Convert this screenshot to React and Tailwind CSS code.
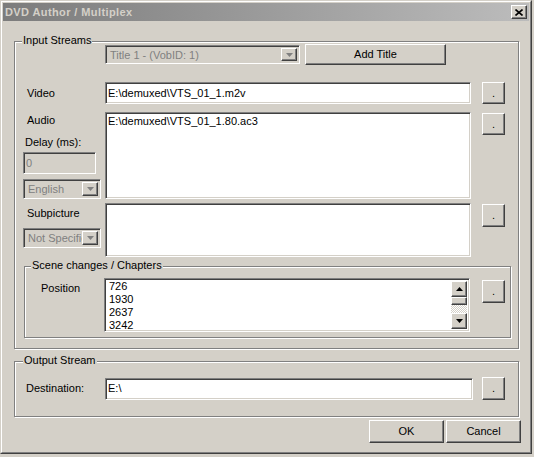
import React from 'react';

const sunken =
  'border border-[#808080] border-r-white border-b-white shadow-[inset_1px_1px_0_#404040,inset_-1px_-1px_0_#d4d0c8]';
const raised =
  'border border-white border-r-[#404040] border-b-[#404040] shadow-[inset_-1px_-1px_0_#808080,inset_1px_1px_0_#d4d0c8]';
const etched =
  'relative border border-[#808080] shadow-[inset_1px_1px_0_#ffffff,1px_1px_0_#ffffff]';

const Arrow = ({ down = true, color = '#000' }) => (
  <svg width="7" height="4" viewBox="0 0 7 4">
    <path d={down ? 'M0 0h7L3.5 4z' : 'M0 4h7L3.5 0z'} fill={color} />
  </svg>
);

const Combo = ({ text, className }) => (
  <div className={`flex bg-[#d4d0c8] p-[2px] ${sunken} ${className}`}>
    <span className="flex-1 overflow-hidden whitespace-nowrap pl-[2px] text-[#808080] leading-[14px]">
      {text}
    </span>
    <div className={`w-[16px] flex items-center justify-center bg-[#d4d0c8] ${raised}`}>
      <Arrow color="#808080" />
    </div>
  </div>
);

const Dots = ({ className }) => (
  <button className={`w-[23px] bg-[#d4d0c8] flex items-center justify-center ${raised} ${className}`}>
    <span className="text-[11px] leading-[11px]">.</span>
  </button>
);

const GroupLabel = ({ children, className }) => (
  <span className={`absolute top-[-8px] bg-[#d4d0c8] px-[1px] leading-[13px] ${className}`}>
    {children}
  </span>
);

const App = () => {
  return (
    <div
      className="w-[534px] h-[457px] bg-[#d4d0c8] text-[11px] leading-[13px] text-black"
      style={{ fontFamily: '"Liberation Sans", Arial, sans-serif' }}
    >
      <div className="w-[532px] h-[454px] border border-[#d4d0c8] border-r-[#404040] border-b-[#404040]">
        <div className="h-full border border-white border-r-[#808080] border-b-[#808080] p-[1px] flex flex-col">
          {/* title bar */}
          <div className="h-[18px] flex items-center bg-gradient-to-r from-[#7c7c7c] to-[#bcbcbc] pl-[2px] pr-[2px]">
            <span className="flex-1 font-bold text-[11px] tracking-[0.4px] text-[#d4d0c8]">
              DVD Author / Multiplex
            </span>
            <div className={`w-[16px] h-[14px] flex items-center justify-center bg-[#d4d0c8] ${raised}`}>
              <svg width="8" height="7" viewBox="0 0 8 7">
                <path d="M0.5 0.5l7 6M7.5 0.5l-7 6" stroke="#000" strokeWidth="1.6" />
              </svg>
            </div>
          </div>

          {/* Input Streams */}
          <div className={`${etched} mt-[20px] ml-[11px] w-[505px] h-[308px]`}>
            <GroupLabel className="left-[7px]">Input Streams</GroupLabel>

            <div className="mt-[2px] h-[21px] flex items-center pl-[90px]">
              <Combo text="Title 1 - (VobID: 1)" className="w-[195px] h-[19px]" />
              <button className={`ml-[5px] w-[141px] h-[21px] bg-[#d4d0c8] ${raised}`}>
                Add Title
              </button>
            </div>

            {/* Video */}
            <div className="mt-[17px] flex items-center">
              <span className="w-[90px] pl-[12px]">Video</span>
              <div className={`w-[366px] h-[22px] bg-white flex items-center pl-[2px] ${sunken}`}>
                E:\demuxed\VTS_01_1.m2v
              </div>
              <Dots className="ml-[11px] h-[22px]" />
            </div>

            {/* Audio */}
            <div className="mt-[8px] flex items-start">
              <div className="w-[90px] flex flex-col items-start">
                <span className="mt-[2px] pl-[12px]">Audio</span>
                <span className="mt-[9px] pl-[10px]">Delay (ms):</span>
                <div className={`mt-[3px] ml-[8px] w-[73px] h-[22px] bg-[#d4d0c8] pl-[2px] flex items-center text-[#808080] ${sunken}`}>
                  0
                </div>
                <Combo text="English" className="mt-[5px] ml-[8px] w-[78px] h-[20px]" />
              </div>
              <div className={`w-[366px] h-[87px] bg-white pl-[2px] pt-[2px] ${sunken}`}>
                E:\demuxed\VTS_01_1.80.ac3
              </div>
              <Dots className="ml-[11px] mt-[1px] h-[22px]" />
            </div>

            {/* Subpicture */}
            <div className="mt-[4px] flex items-start">
              <div className="w-[90px] flex flex-col items-start">
                <span className="mt-[4px] pl-[12px]">Subpicture</span>
                <Combo text="Not Specified" className="mt-[8px] ml-[8px] w-[78px] h-[20px]" />
              </div>
              <div className={`w-[366px] h-[54px] bg-white ${sunken}`} />
              <Dots className="ml-[11px] mt-[1px] h-[23px]" />
            </div>

            {/* Scene changes */}
            <div className={`${etched} mt-[9px] ml-[9px] w-[487px] h-[72px]`}>
              <GroupLabel className="left-[6px]">Scene changes / Chapters</GroupLabel>
              <div className="mt-[11px] flex items-start">
                <span className="w-[79px] pl-[16px] mt-[4px]">Position</span>
                <div className={`w-[366px] h-[54px] bg-white flex p-[2px] ${sunken}`}>
                  <div className="flex-1 overflow-hidden pl-[2px] -mt-[1px]">
                    <div>726</div>
                    <div>1930</div>
                    <div>2637</div>
                    <div>3242</div>
                  </div>
                  <div className="w-[16px] flex flex-col">
                    <div className={`h-[16px] flex items-center justify-center bg-[#d4d0c8] ${raised}`}>
                      <Arrow down={false} />
                    </div>
                    <div className={`h-[8px] bg-[#d4d0c8] ${raised}`} />
                    <div className="flex-1 bg-[repeating-conic-gradient(#d4d0c8_0%_25%,#ffffff_0%_50%)] bg-[length:2px_2px]" />
                    <div className={`h-[16px] flex items-center justify-center bg-[#d4d0c8] ${raised}`}>
                      <Arrow />
                    </div>
                  </div>
                </div>
                <Dots className="ml-[12px] mt-[2px] h-[23px]" />
              </div>
            </div>
          </div>

          {/* Output Stream */}
          <div className={`${etched} mt-[12px] ml-[11px] w-[505px] h-[56px]`}>
            <GroupLabel className="left-[8px]">Output Stream</GroupLabel>
            <div className="mt-[15px] flex items-center">
              <span className="w-[90px] pl-[11px]">Destination:</span>
              <div className={`w-[368px] h-[22px] bg-white flex items-center pl-[2px] ${sunken}`}>
                E:\
              </div>
              <Dots className="ml-[9px] h-[23px]" />
            </div>
          </div>

          {/* buttons */}
          <div className="mt-[3px] flex justify-end pr-[8px] gap-[2px]">
            <button className={`w-[75px] h-[23px] bg-[#d4d0c8] ${raised}`}>OK</button>
            <button className={`w-[75px] h-[23px] bg-[#d4d0c8] ${raised}`}>Cancel</button>
          </div>
        </div>
      </div>
    </div>
  );
};

export default App;
